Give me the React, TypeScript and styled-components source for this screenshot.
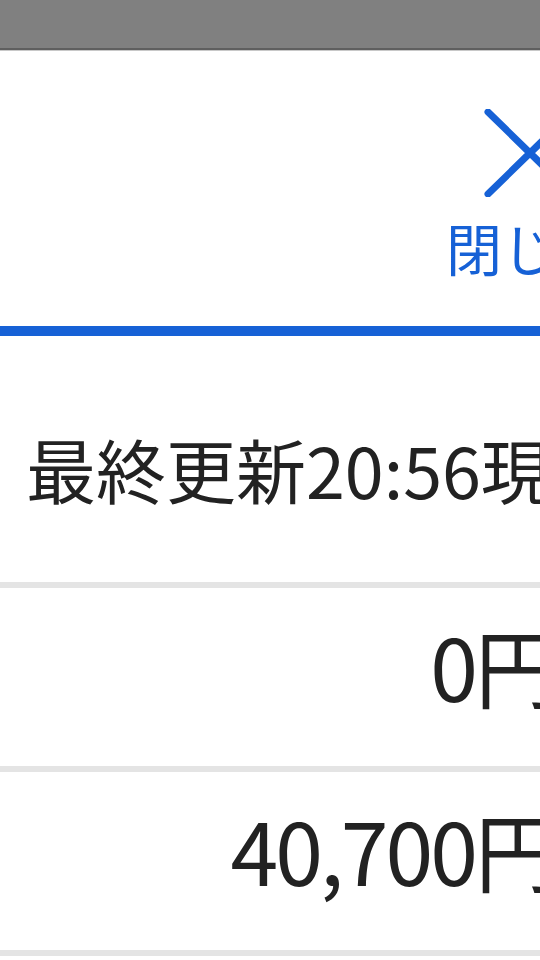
import React from "react";
import styled, { createGlobalStyle } from "styled-components";

const GlobalStyle = createGlobalStyle`
  html, body {
    margin: 0;
    padding: 0;
    overflow: hidden;
    background: #ffffff;
  }
  body {
    font-family: "Noto Sans CJK JP", "Noto Sans", sans-serif;
    color: #222222;
  }
`;

const Page = styled.div`
  width: 640px;
  display: flex;
  flex-direction: column;
`;

const TopBar = styled.div`
  height: 48px;
  background: #808080;
  border-bottom: 2px solid #5f5f5f;
  box-shadow: 0 1px 0 #c8c8c8;
`;

const Header = styled.header`
  height: 286px;
  box-sizing: border-box;
  display: flex;
  justify-content: flex-end;
  align-items: flex-start;
  padding: 59px 20px 0 0;
  border-bottom: 10px solid #1661d6;
`;

const CloseButton = styled.button`
  width: 180px;
  border: none;
  background: transparent;
  padding: 0;
  display: flex;
  flex-direction: column;
  align-items: center;
  color: #1661d6;
  font-family: inherit;
  cursor: pointer;
`;

const CloseLabel = styled.span`
  font-size: 56px;
  line-height: 1;
  margin-top: 22px;
  white-space: nowrap;
`;

const InfoRow = styled.div`
  height: 252px;
  box-sizing: border-box;
  display: flex;
  align-items: center;
  padding: 18px 0 0 26px;
  font-size: 70px;
  white-space: nowrap;
  border-bottom: 6px solid #e4e4e4;
`;

const ValueRow = styled.div`
  height: 184px;
  box-sizing: border-box;
  display: flex;
  align-items: center;
  justify-content: flex-end;
  padding: 0 82px 26px 0;
  font-size: 86px;
  letter-spacing: -3px;
  white-space: nowrap;
  border-bottom: 6px solid #e4e4e4;
`;

const CloseIcon = () => (
  <svg width="92" height="88" viewBox="0 0 92 88" fill="none">
    <path d="M4 3 L88 85 M4 85 L88 3" stroke="#1661d6" strokeWidth="7" strokeLinecap="round" />
  </svg>
);

export default function App() {
  return (
    <>
      <GlobalStyle />
      <Page>
        <TopBar />
        <Header>
          <CloseButton>
            <CloseIcon />
            <CloseLabel>閉じる</CloseLabel>
          </CloseButton>
        </Header>
        <InfoRow>最終更新20:56現在</InfoRow>
        <ValueRow>0円</ValueRow>
        <ValueRow>40,700円</ValueRow>
      </Page>
    </>
  );
}
